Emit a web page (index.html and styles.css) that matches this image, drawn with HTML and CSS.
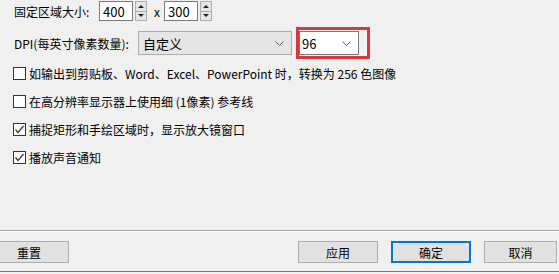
FILE: index.html
```html
<!DOCTYPE html>
<html lang="zh-CN">
<head>
  <meta charset="UTF-8">
  <title>输出选项</title>
  <link rel="stylesheet" href="styles.css">
</head>
<body>
  <div class="dialog">
    <div class="options">
      <div class="row size-row">
        <span class="label size-label">固定区域大小:</span>
        <span class="field">400</span>
        <span class="spin"><i class="up"></i><i class="down"></i></span>
        <span class="times">x</span>
        <span class="field">300</span>
        <span class="spin"><i class="up"></i><i class="down"></i></span>
      </div>
      <div class="row dpi-row">
        <span class="label dpi-label">DPI(每英寸像素数量):</span>
        <div class="combo combo-list">
          <span>自定义</span>
          <svg width="9" height="5" viewBox="0 0 9 5"><polyline points="0.5,0.5 4.5,4.5 8.5,0.5" fill="none" stroke="#606060" stroke-width="1"/></svg>
        </div>
        <div class="combo combo-edit marked">
          <span>96</span>
          <svg width="9" height="5" viewBox="0 0 9 5"><polyline points="0.5,0.5 4.5,4.5 8.5,0.5" fill="none" stroke="#606060" stroke-width="1"/></svg>
        </div>
      </div>
      <label class="check"><span class="box"></span>如输出到剪贴板、Word、Excel、PowerPoint 时，转换为 256 色图像</label>
      <label class="check"><span class="box"></span>在高分辨率显示器上使用细 (1像素) 参考线</label>
      <label class="check"><span class="box"><svg width="11" height="11" viewBox="0 0 11 11"><polyline points="1.5,5.5 4,8.5 9.5,2" fill="none" stroke="#333" stroke-width="1.2"/></svg></span>捕捉矩形和手绘区域时，显示放大镜窗口</label>
      <label class="check"><span class="box"><svg width="11" height="11" viewBox="0 0 11 11"><polyline points="1.5,5.5 4,8.5 9.5,2" fill="none" stroke="#333" stroke-width="1.2"/></svg></span>播放声音通知</label>
    </div>
    <div class="footer">
      <button class="btn reset">重置</button>
      <button class="btn">应用</button>
      <button class="btn default">确定</button>
      <button class="btn cancel">取消</button>
    </div>
  </div>
</body>
</html>
```

FILE: styles.css
```css
* {
  margin: 0;
  padding: 0;
  box-sizing: border-box;
}

body {
  font-family: "Noto Sans CJK SC", sans-serif;
  font-size: 12px;
  color: #000;
  background-color: #f0f0f0;
  overflow: hidden;
}

.dialog {
  display: flex;
  flex-direction: column;
  width: 559px;
  height: 274px;
}

.options {
  flex: 1;
  display: flex;
  flex-direction: column;
}

.row {
  display: flex;
  align-items: center;
  padding-left: 14px;
}

.size-row {
  margin-top: 1px;
  height: 20px;
}

.size-label {
  width: 85px;
}

.field {
  display: flex;
  align-items: center;
  width: 34px;
  height: 20px;
  padding-left: 3px;
  background-color: #fff;
  border: 1px solid #7a7a7a;
  font-size: 13px;
}

.spin {
  display: flex;
  flex-direction: column;
  width: 12px;
  height: 20px;
  margin-left: 2px;
  border: 1px solid #adadad;
  background-color: #e5e5e5;
}

.spin i {
  flex: 1;
  display: flex;
  align-items: center;
  justify-content: center;
}

.spin .up {
  border-bottom: 1px solid #adadad;
}

.spin i::before {
  content: "";
  border-left: 3px solid transparent;
  border-right: 3px solid transparent;
}

.spin .up::before {
  border-bottom: 3px solid #222;
}

.spin .down::before {
  border-top: 3px solid #222;
}

.times {
  width: 17px;
  padding-left: 7px;
}

.dpi-row {
  margin-top: 10px;
  height: 24px;
}

.dpi-label {
  width: 124px;
}

.combo {
  display: flex;
  align-items: center;
  justify-content: space-between;
  height: 24px;
  padding: 0 7px 0 4px;
  border: 1px solid #acacac;
  font-size: 13px;
}

.combo-list {
  width: 154px;
  background-color: #e5e5e5;
}

.combo-edit {
  width: 60px;
  margin-left: 7px;
  padding-left: 2px;
  background-color: #fff;
  border-color: #7a7a7a;
}

/* red annotation frame drawn over the screenshot */
.marked {
  position: relative;
}

.marked::after {
  content: "";
  position: absolute;
  left: -4px;
  top: -5px;
  right: -12px;
  bottom: -5px;
  border: 3px solid #d9363e;
}

.check {
  display: flex;
  align-items: center;
  height: 14px;
  padding-left: 13px;
  margin-top: 14px;
}

.dpi-row + .check {
  margin-top: 11px;
}

.box {
  display: flex;
  align-items: center;
  justify-content: center;
  width: 13px;
  height: 13px;
  margin-right: 3px;
  background-color: #fff;
  border: 1px solid #333;
}

.footer {
  display: flex;
  align-items: flex-start;
  gap: 13px;
  height: 42px;
  padding-top: 10px;
  border-top: 1px solid #a0a0a0;
  box-shadow: inset 0 1px 0 #fff;
  border-bottom: 1px solid #7a7a7a;
  margin-bottom: 2px;
}

.btn {
  flex-shrink: 0;
  width: 80px;
  height: 22px;
  font-family: inherit;
  font-size: 12px;
  color: #000;
  background-color: #e1e1e1;
  border: 1px solid #adadad;
}

.reset {
  margin-left: -11px;
  margin-right: auto;
}

.default {
  border: 2px solid #0078d7;
}

.cancel {
  width: 73px;
  margin-right: 2px;
}
```
